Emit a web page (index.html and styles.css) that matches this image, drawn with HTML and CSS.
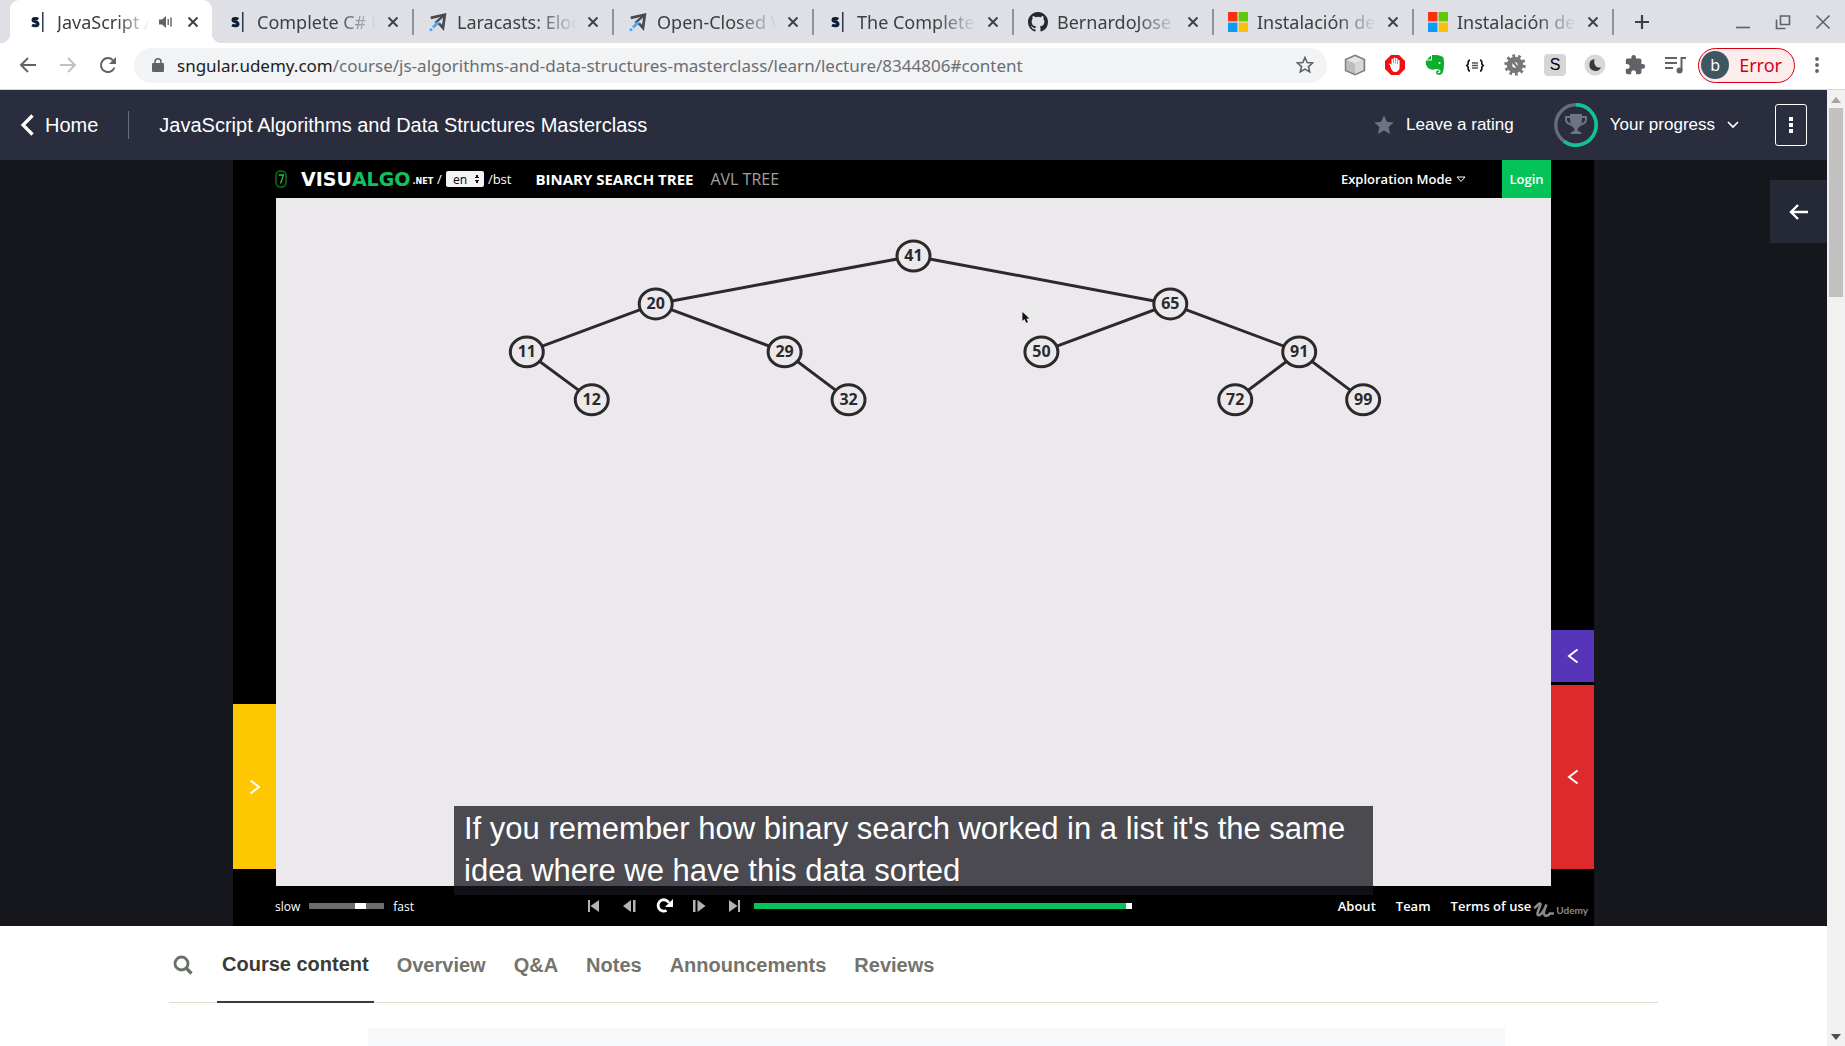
FILE: index.html
```html
<!DOCTYPE html>
<html lang="en">
<head>
<meta charset="utf-8">
<title>JavaScript Algorithms and Data Structures Masterclass</title>
<link rel="stylesheet" href="styles.css">
</head>
<body>
<svg class="defs" aria-hidden="true">
  <symbol id="close" viewBox="0 0 12 12"><path d="M1.500 1.500l9 9M10.500 1.500l-9 9" stroke="currentColor" stroke-width="1.900" fill="none"/></symbol>
  <symbol id="sngular" viewBox="0 0 20 20"><path d="M10.300 7.300C8.500 6.200 5 6 5 8c0 2.200 5 1.400 5 4 0 2.300-3.800 2.200-6 1" stroke="#0d1d36" stroke-width="3" fill="none"/><path d="M14.800 0v20" stroke="#0d1d36" stroke-width="1.300"/></symbol>
  <symbol id="laracasts" viewBox="0 0 20 22"><path d="M2 6.500L17.500 3 15.500 17.500 11 12.500" stroke="#484a50" stroke-width="3" fill="none"/><path d="M17.500 3L7 12" stroke="#484a50" stroke-width="2.500"/><path d="M10.500 11l-6 6" stroke="#4ea5f7" stroke-width="3"/><circle cx="2.200" cy="19.500" r="1.700" fill="#4ea5f7"/></symbol>
  <symbol id="github" viewBox="0 0 16 16"><path fill="#24292e" d="M8 0C3.580 0 0 3.580 0 8c0 3.540 2.290 6.530 5.470 7.590.4.070.55-.17.55-.38 0-.19-.01-.82-.01-1.490-2.010.37-2.530-.49-2.690-.94-.09-.23-.48-.94-.82-1.130-.28-.15-.68-.52-.01-.53.63-.01 1.080.58 1.230.82.72 1.210 1.870.87 2.330.66.07-.52.28-.87.51-1.070-1.780-.2-3.640-.89-3.640-3.950 0-.87.31-1.590.82-2.150-.08-.2-.36-1.020.08-2.120 0 0 .67-.21 2.200.82a7.600 7.600 0 014 0c1.530-1.040 2.200-.82 2.200-.82.44 1.100.16 1.920.08 2.120.51.56.82 1.270.82 2.150 0 3.070-1.870 3.750-3.650 3.950.29.25.54.73.54 1.480 0 1.070-.01 1.930-.01 2.200 0 .21.15.46.55.38A8 8 0 0016 8c0-4.420-3.580-8-8-8z"/></symbol>
  <symbol id="microsoft" viewBox="0 0 20 20"><path fill="#f7330f" d="M0 0h9.400v9.400H0z"/><path fill="#62c80b" d="M10.600 0H20v9.400h-9.400z"/><path fill="#0b9cf5" d="M0 10.600h9.400V20H0z"/><path fill="#fdbf09" d="M10.600 10.600H20V20h-9.400z"/></symbol>
  <symbol id="chevron-left" viewBox="0 0 12 16"><path d="M10.500 1.500L2 8l8.500 6.500" stroke="currentColor" stroke-width="2" fill="none"/></symbol>
</svg>

<header class="tabstrip">
  <div class="tab tab-active"><svg class="favicon"><use href="#sngular"/></svg><span class="tab-title">JavaScript Algorithms</span><svg class="audio" viewBox="0 0 14 14"><path d="M0 4.500h3L7 1v12L3 9.500H0z" fill="#5f6368"/><path d="M9.200 4v6M12 2.500v9" stroke="#5f6368" stroke-width="1.400"/></svg><button class="tab-close" aria-label="Close tab"><svg><use href="#close"/></svg></button></div>
  <div class="tab"><svg class="favicon"><use href="#sngular"/></svg><span class="tab-title">Complete C# Unity</span><button class="tab-close" aria-label="Close tab"><svg><use href="#close"/></svg></button></div>
  <div class="tab"><svg class="favicon"><use href="#laracasts"/></svg><span class="tab-title">Laracasts: Eloquent</span><button class="tab-close" aria-label="Close tab"><svg><use href="#close"/></svg></button></div>
  <div class="tab"><svg class="favicon"><use href="#laracasts"/></svg><span class="tab-title">Open-Closed Wins</span><button class="tab-close" aria-label="Close tab"><svg><use href="#close"/></svg></button></div>
  <div class="tab"><svg class="favicon"><use href="#sngular"/></svg><span class="tab-title">The Complete</span><button class="tab-close" aria-label="Close tab"><svg><use href="#close"/></svg></button></div>
  <div class="tab"><svg class="favicon"><use href="#github"/></svg><span class="tab-title">BernardoJose</span><button class="tab-close" aria-label="Close tab"><svg><use href="#close"/></svg></button></div>
  <div class="tab"><svg class="favicon"><use href="#microsoft"/></svg><span class="tab-title">Instalación de</span><button class="tab-close" aria-label="Close tab"><svg><use href="#close"/></svg></button></div>
  <div class="tab"><svg class="favicon"><use href="#microsoft"/></svg><span class="tab-title">Instalación de</span><button class="tab-close" aria-label="Close tab"><svg><use href="#close"/></svg></button></div>
  <button class="new-tab" aria-label="New tab"><svg viewBox="0 0 16 16"><path d="M8 1v14M1 8h14" stroke="#3c4043" stroke-width="2.200"/></svg></button>
  <div class="window-controls">
    <button aria-label="Minimize"><svg viewBox="0 0 16 16"><path d="M1 13.500h14" stroke="#5f6368" stroke-width="1.600"/></svg></button>
    <button aria-label="Restore"><svg viewBox="0 0 16 16"><path d="M5.500 2h9v8.500h-9zM1.500 5.500v9h9" stroke="#5f6368" stroke-width="1.600" fill="none"/></svg></button>
    <button aria-label="Close"><svg viewBox="0 0 16 16"><path d="M1.500 1.500l13 13M14.500 1.500l-13 13" stroke="#5f6368" stroke-width="1.600"/></svg></button>
  </div>
</header>

<div class="toolbar">
  <div class="nav-buttons">
    <button aria-label="Back"><svg viewBox="0 0 18 18"><path d="M17 9H2M9 2L2 9l7 7" stroke="#5f6368" stroke-width="1.900" fill="none"/></svg></button>
    <button aria-label="Forward"><svg viewBox="0 0 18 18"><path d="M1 9h15M9 2l7 7-7 7" stroke="#bdc0c4" stroke-width="1.900" fill="none"/></svg></button>
    <button aria-label="Reload"><svg viewBox="0 0 18 18"><path d="M15.500 11.500A7 7 0 1 1 14 4.200" stroke="#5f6368" stroke-width="2" fill="none"/><path d="M17 1v7h-7z" fill="#5f6368"/></svg></button>
  </div>
  <div class="omnibox">
    <svg class="lock" viewBox="0 0 12 14"><rect y="5" width="12" height="9" rx="1" fill="#5f6368"/><path d="M3 6V3.800a3 3 0 0 1 6 0V6" stroke="#5f6368" stroke-width="1.500" fill="none"/></svg>
    <div class="url"><span class="domain">sngular.udemy.com</span>/course/js-algorithms-and-data-structures-masterclass/learn/lecture/8344806#content</div>
    <button aria-label="Bookmark"><svg class="bookmark" viewBox="0 0 18 18"><path d="M9 1.500l2.200 5 5.400.5-4.100 3.600 1.200 5.300L9 13.100l-4.700 2.800 1.200-5.300L1.400 7l5.400-.5z" stroke="#5f6368" stroke-width="1.600" fill="none"/></svg></button>
  </div>
  <div class="extensions">
    <svg viewBox="0 0 22 22"><path d="M11 1.200l9.500 4.300v11L11 20.800l-9.500-4.300v-11z" fill="#bdbdbd" stroke="#808080" stroke-width="1.500"/><path d="M11 2.500l8 3.500-8 3.500L3 6z" fill="#e4e4e4"/><path d="M11 9.800l8-3.300v9.500l-8 3.700z" fill="#d8d8d8"/></svg>
    <svg viewBox="0 0 22 22"><path d="M7 1h8l6 6v8l-6 6H7l-6-6V7z" fill="#f40d12"/><path d="M6 11l-1.500-1c1-1.200 2.200-.5 3 .8V5.500a.8.800 0 0 1 1.600 0V9.500h.5V4.300a.8.800 0 0 1 1.700 0v5.200h.5V4.800a.8.800 0 0 1 1.700 0V10h.5V6.500a.8.800 0 0 1 1.600 0V13c0 3.500-2 5-4.500 5-3 0-4-3-5.100-7z" fill="#fff"/></svg>
    <svg viewBox="0 0 22 22"><path d="M8 1h5c3 1 6 1 6.500 3 1 5 .5 12-1 15-1 2.500-6.500 2.500-6.500-.5 0-2 2-2.500 3-2V18h-1.500c0 1.500 3 1.500 3-.5 0-2-3-2.500-5-2.500-1.500 1-5 1-7.500-1C2 12 1.500 9 2 6.500h5c1 0 1-.5 1-1.500z" fill="#0ead2b"/><path d="M7 1.500V5.500H3z" fill="#0ead2b"/><circle cx="15.500" cy="9" r="1" fill="#fff"/></svg>
    <svg viewBox="0 0 22 22"><path d="M6 6c-2.500 0-1.500 3-2 4.300L2.800 11.500 4 12.700C4.500 14 3.500 17 6 17M16 6c2.500 0 1.500 3 2 4.300l1.200 1.200-1.200 1.200c-.5 1.300.5 4.300-2 4.300" stroke="#111" stroke-width="1.700" fill="none"/><path d="M8 9h6M8 11.500h6M8 14h6" stroke="#555" stroke-width="1.400"/></svg>
    <svg viewBox="0 0 22 22"><circle cx="11" cy="11" r="9" fill="none" stroke="#777" stroke-width="3.500" stroke-dasharray="2.700 2.950"/><circle cx="11" cy="11" r="5.500" fill="none" stroke="#777" stroke-width="5.500"/><path d="M9 8l5 6" stroke="#777" stroke-width="2.400"/></svg>
    <span class="ext-letter">S</span>
    <svg viewBox="0 0 22 22"><circle cx="11" cy="11" r="10.500" fill="#d8d8d8"/><path d="M10.500 5a6 6 0 1 0 6.500 8c-4 2-8-2-6.500-8z" fill="#33383d"/></svg>
    <svg viewBox="0 0 24 24"><path fill="#5f6368" d="M20.500 11H19V7c0-1.100-.9-2-2-2h-4V3.500a2.500 2.500 0 0 0-5 0V5H4c-1.100 0-2 .9-2 2v3.800h1.500c1.500 0 2.700 1.200 2.700 2.700S5 16.200 3.500 16.200H2V20c0 1.100.9 2 2 2h3.800v-1.500c0-1.500 1.200-2.700 2.700-2.700s2.700 1.200 2.700 2.700V22H17c1.100 0 2-.9 2-2v-4h1.500a2.500 2.500 0 0 0 0-5z"/></svg>
    <svg viewBox="0 0 22 22"><path d="M1 4h12M1 9h12M1 14h8M17.500 17V4H22" stroke="#5f6368" stroke-width="2" fill="none"/><circle cx="15.500" cy="16.500" r="3" fill="#5f6368"/></svg>
  </div>
  <button class="profile"><span class="avatar">b</span>Error</button>
  <button class="kebab" aria-label="Menu"><svg viewBox="0 0 4 16"><g fill="#5f6368"><circle cx="2" cy="2" r="1.900"/><circle cx="2" cy="8" r="1.900"/><circle cx="2" cy="14" r="1.900"/></g></svg></button>
</div>

<div class="viewport">
  <div class="page">
    <header class="course-header">
      <a class="home" href="#"><svg viewBox="0 0 14 22"><path d="M12.500 1.500L3 11l9.500 9.500" stroke="#fff" stroke-width="3.200" fill="none"/></svg>Home</a>
      <h1>JavaScript Algorithms and Data Structures Masterclass</h1>
      <button class="rating"><svg viewBox="0 0 20 20"><path fill="#6e7383" d="M10 .5l2.900 6.300 6.800.7-5.100 4.600 1.500 6.900L10 15.500 3.900 19l1.500-6.900L.3 7.500l6.800-.7z"/></svg>Leave a rating</button>
      <button class="progress"><svg class="ring" viewBox="0 0 44 44"><circle cx="22" cy="22" r="20.200" fill="none" stroke="#686b7a" stroke-width="3.400"/><path d="M22 1.800A20.200 20.200 0 1 1 10 38.300" fill="none" stroke="#0cc592" stroke-width="3.400"/><path fill="#6e7383" d="M16 11h12v2h5v3.500c0 3.500-3 5.500-6 6-1 1.300-2 2-3.200 2.400V28c1.500 0 3.700.7 3.700 3H16.500c0-2.300 2.200-3 3.700-3v-3.100c-1.200-.4-2.200-1.100-3.200-2.400-3-.5-6-2.500-6-6V13h5zm-3 4v1.500c0 2 1.700 3.200 3.500 3.700-.4-1.400-.5-3.200-.5-5.200zm18 0h-3c0 2-.1 3.800-.5 5.200 1.800-.5 3.500-1.700 3.500-3.700z"/></svg>Your progress<svg class="caret" viewBox="0 0 12 8"><path d="M1 1l5 5 5-5" stroke="#fff" stroke-width="1.700" fill="none"/></svg></button>
      <button class="more" aria-label="More"><svg viewBox="0 0 4 16"><path d="M0 0h4v4H0zM0 6h4v4H0zM0 12h4v4H0z" fill="#fff"/></svg></button>
    </header>

    <main>
      <section class="stage">
        <div class="video">
          <div class="va-header">
            <svg class="va-badge" viewBox="0 0 12 18"><rect x="1" y="1" width="10" height="16" rx="4.500" fill="none" stroke="#087a1e" stroke-width="1.400"/><path d="M3.500 5h5l-3 8.500" stroke="#1ec247" stroke-width="1.300" fill="none"/></svg>
            <a class="va-logo" href="#">VISU<b>ALGO</b></a><span class="va-net">.NET</span>
            <label class="va-lang">/<select aria-label="Language"><option>en</option></select>/bst</label>
            <a class="va-mode va-mode-on" href="#">BINARY SEARCH TREE</a>
            <a class="va-mode" href="#">AVL TREE</a>
            <button class="va-explore">Exploration Mode<svg viewBox="0 0 10 7"><path d="M1 1h8L5 5.500z" stroke="#fff" fill="none"/></svg></button>
            <button class="va-login">Login</button>
          </div>
          <div class="va-body">
            <div class="va-side"><button class="drawer drawer-yellow" aria-label="Open actions"><svg class="flip"><use href="#chevron-left"/></svg></button></div>
            <svg class="canvas" viewBox="0 0 1276 688" preserveAspectRatio="xMidYMin meet">
              <g stroke="#2b292b" stroke-width="3">
                <path d="M638 58L380 106L251 154L316 202M380 106L509 154L573 202M638 58L895 106L766 154M895 106L1024 154L960 202M1024 154L1088 202" fill="none"/>
                <g fill="#ece9ec">
                  <ellipse cx="638" cy="58" rx="16.500" ry="15"/><ellipse cx="380" cy="106" rx="16.500" ry="15"/><ellipse cx="895" cy="106" rx="16.500" ry="15"/><ellipse cx="251" cy="154" rx="16.500" ry="15"/><ellipse cx="509" cy="154" rx="16.500" ry="15"/><ellipse cx="766" cy="154" rx="16.500" ry="15"/><ellipse cx="1024" cy="154" rx="16.500" ry="15"/><ellipse cx="316" cy="202" rx="16.500" ry="15"/><ellipse cx="573" cy="202" rx="16.500" ry="15"/><ellipse cx="960" cy="202" rx="16.500" ry="15"/><ellipse cx="1088" cy="202" rx="16.500" ry="15"/>
                </g>
              </g>
              <g class="node-labels">
                <text x="638" y="63">41</text><text x="380" y="111">20</text><text x="895" y="111">65</text><text x="251" y="159">11</text><text x="509" y="159">29</text><text x="766" y="159">50</text><text x="1024" y="159">91</text><text x="316" y="207">12</text><text x="573" y="207">32</text><text x="960" y="207">72</text><text x="1088" y="207">99</text>
              </g>
              <path d="M747 114v9l2-2 2 4 1.500-1-1.500-3.500h3z" fill="#111"/>
            </svg>
            <div class="va-side"><button class="drawer drawer-purple" aria-label="Open code trace"><svg><use href="#chevron-left"/></svg></button><button class="drawer drawer-red" aria-label="Open status"><svg><use href="#chevron-left"/></svg></button></div>
          </div>
          <div class="va-footer">
            <label class="speed">slow<input type="range" class="speed-range" min="0" max="100" value="72" aria-label="Speed">fast</label>
            <div class="playback">
              <button aria-label="First"><svg viewBox="0 0 18 16"><path d="M3 2h2v12H3zM14 2v12L5.500 8z" fill="#b5b5b5"/></svg></button>
              <button aria-label="Step back"><svg viewBox="0 0 18 16"><path d="M13 2h2.500v12H13zM11 2v12L3 8z" fill="#b5b5b5"/></svg></button>
              <button aria-label="Replay"><svg viewBox="0 0 18 16"><path d="M11.500 12.500A5.700 5.700 0 1 1 14 5" stroke="#fff" stroke-width="2.800" fill="none"/><path d="M18 1v8H10z" fill="#fff"/></svg></button>
              <button aria-label="Step forward"><svg viewBox="0 0 18 16"><path d="M3 2h2.500v12H3zM7.500 2v12l8-6z" fill="#b5b5b5"/></svg></button>
              <button aria-label="Last"><svg viewBox="0 0 18 16"><path d="M13 2h2v12h-2zM4 2v12l8.500-6z" fill="#b5b5b5"/></svg></button>
            </div>
            <input type="range" class="seek" min="0" max="100" value="100" aria-label="Seek">
            <nav class="va-links"><a href="#">About</a><a href="#">Team</a><a href="#">Terms of use</a></nav>
            <div class="udemy"><svg viewBox="0 0 22 16"><path d="M1 6c3-1 4-5 6-4.500C9 2 4 9 4.500 12c.5 3 5 1 9-9.500-3 7-3.500 10-1.500 11 2 .8 4-.5 5-2h4" stroke="#8a8a8a" stroke-width="2.600" fill="none"/></svg>Udemy</div>
          </div>
          <p class="caption">If you remember how binary search worked in a list it's the same idea where we have this data sorted</p>
        </div>
        <button class="sidebar-toggle" aria-label="Open sidebar"><svg viewBox="0 0 20 16"><path d="M19 8H2M9 1L2 8l7 7" stroke="#fff" stroke-width="2.400" fill="none"/></svg></button>
      </section>

      <section class="dashboard">
        <nav class="course-tabs">
          <button class="search" aria-label="Search"><svg viewBox="0 0 20 20"><circle cx="8.500" cy="8.500" r="6.500" stroke="#686f67" stroke-width="2.800" fill="none"/><path d="M13 13l5.500 5.500" stroke="#686f67" stroke-width="3.200"/></svg></button>
          <a class="current" href="#">Course content</a><a href="#">Overview</a><a href="#">Q&amp;A</a><a href="#">Notes</a><a href="#">Announcements</a><a href="#">Reviews</a>
        </nav>
        <div class="panel"></div>
      </section>
    </main>
  </div>
  <div class="scrollbar" aria-hidden="true">
    <svg viewBox="0 0 10 6"><path d="M5 0l5 6H0z" fill="#a3a3a3"/></svg>
    <div class="thumb"></div>
    <svg viewBox="0 0 10 6"><path d="M0 0h10L5 6z" fill="#505050"/></svg>
  </div>
</div>
</body>
</html>
```

FILE: styles.css
```css
* { box-sizing: border-box; }
body {
  margin: 0;
  height: 100vh;
  display: flex;
  flex-direction: column;
  overflow: hidden;
  font-family: "Liberation Sans", Arial, sans-serif;
  background: #fff;
}
button { border: 0; padding: 0; background: none; font: inherit; color: inherit; }
a { color: inherit; text-decoration: none; }
svg { display: block; flex: none; }
.defs { position: absolute; width: 0; height: 0; }

/* Browser tab strip */
.tabstrip {
  flex: none;
  display: flex;
  align-items: center;
  height: 43px;
  padding: 0 14px;
  background: #dee0e6;
  font: 18px "Noto Sans", "Open Sans", sans-serif;
  color: #3c4043;
}
.tab {
  flex: 0 1 200px;
  min-width: 0;
  height: 26px;
  display: flex;
  align-items: center;
  padding: 0 13px 0 14px;
  border-right: 2px solid #909297;
}
.tab-active {
  position: relative;
  flex-basis: 198px;
  height: 43px;
  margin-right: 2px;
  border-right: 0;
  background: #fff;
  border-radius: 9px 9px 0 0;
  box-shadow: -4px 0 #fff;
}
.tab-active::before, .tab-active::after {
  content: "";
  position: absolute;
  bottom: 0;
  width: 9px;
  height: 9px;
}
.tab-active::before { left: -13px; background: radial-gradient(circle at 0 0, #dee0e6 9px, #fff 9px); }
.tab-active::after { right: -9px; background: radial-gradient(circle at 100% 0, #dee0e6 9px, #fff 9px); }
.favicon { width: 20px; height: 20px; }
.tab-title {
  flex: 1;
  margin: 0 8px 0 9px;
  overflow: hidden;
  white-space: nowrap;
  -webkit-mask-image: linear-gradient(90deg, #000 65%, transparent 98%);
  mask-image: linear-gradient(90deg, #000 65%, transparent 98%);
}
.audio { width: 14px; height: 14px; margin-right: 14px; }
.tab-close svg { width: 12px; height: 12px; }
.new-tab { margin-left: 20px; }
.new-tab svg, .window-controls svg { width: 16px; height: 16px; }
.window-controls { margin-left: auto; display: flex; gap: 24px; }

/* Browser toolbar */
.toolbar {
  flex: none;
  display: flex;
  align-items: center;
  height: 47px;
  padding: 0 26px 2px 19px;
  border-bottom: 1px solid #d3d6da;
  background: #fff;
  font: 17px "Noto Sans", "Open Sans", sans-serif;
}
.nav-buttons { display: flex; gap: 22px; margin-right: 17px; }
.nav-buttons svg { width: 18px; height: 18px; }
.omnibox {
  flex: 1;
  min-width: 0;
  display: flex;
  align-items: center;
  height: 35px;
  padding: 0 13px 0 18px;
  border-radius: 18px;
  background: #f1f3f4;
}
.lock { width: 12px; height: 14px; margin-right: 13px; }
.url { flex: 1; white-space: nowrap; overflow: hidden; color: #6a6e73; }
.domain { color: #202124; }
.bookmark { width: 18px; height: 18px; }
.extensions { display: flex; align-items: center; gap: 18px; margin: 0 12px 0 17px; }
.extensions svg { width: 22px; height: 22px; }
.ext-letter {
  width: 22px;
  height: 22px;
  border-radius: 4px;
  background: #d6d6d6;
  font: 16px/22px "Liberation Sans", sans-serif;
  text-align: center;
}
.profile {
  display: flex;
  align-items: center;
  gap: 10px;
  height: 35px;
  padding: 0 12px 0 2px;
  border: 1px solid #d5000f;
  border-radius: 18px;
  background: #fdecec;
  color: #d0021b;
  font-size: 18px;
}
.avatar {
  width: 28px;
  height: 28px;
  border-radius: 50%;
  background: #3f5763;
  color: #fff;
  font-size: 16px;
  line-height: 28px;
}
.kebab { margin-left: 20px; }
.kebab svg { width: 4px; height: 16px; }

/* Page viewport */
.viewport { flex: 1; min-height: 0; display: flex; }
.page { flex: 1; min-width: 0; overflow: hidden; }
.scrollbar {
  width: 18px;
  display: flex;
  flex-direction: column;
  align-items: center;
  padding: 7px 0 6px;
  background: #f1f1f1;
}
.scrollbar svg { width: 10px; height: 6px; }
.thumb { width: 14px; height: 20%; margin: 5px 0 auto; background: #c1c1c1; }

/* Course header */
.course-header {
  display: flex;
  align-items: center;
  height: 70px;
  padding: 0 20px;
  background: #2a2d3e;
  color: #fff;
  font-size: 17px;
}
.home {
  display: flex;
  align-items: center;
  gap: 11px;
  height: 28px;
  padding-right: 30px;
  border-right: 1px solid #686b7a;
  font-size: 20px;
}
.home svg { width: 14px; height: 22px; }
.course-header h1 { flex: 1; margin: 0 0 0 30px; font-size: 20px; font-weight: 400; }
.rating, .progress { display: flex; align-items: center; gap: 12px; }
.rating { margin-right: 40px; }
.rating svg { width: 20px; height: 20px; }
.ring { width: 44px; height: 44px; }
.caret { width: 12px; height: 8px; }
.more {
  display: flex;
  align-items: center;
  justify-content: center;
  width: 32px;
  height: 42px;
  margin-left: 36px;
  border: 1px solid #fff;
  border-radius: 3px;
}
.more svg { width: 4px; height: 16px; }

/* Video stage */
.stage { position: relative; background: #16171c; }
.sidebar-toggle {
  position: absolute;
  top: 20px;
  right: 0;
  width: 57px;
  height: 63px;
  display: flex;
  align-items: center;
  justify-content: center;
  background: #242935;
}
.sidebar-toggle svg { width: 20px; height: 16px; }
.video {
  position: relative;
  display: flex;
  flex-direction: column;
  width: 100%;
  max-width: 1361px;
  aspect-ratio: 1361 / 766;
  margin: 0 auto;
  background: #000;
  color: #fff;
  font-family: "Open Sans", "Noto Sans", sans-serif;
}
.va-header { flex: none; display: flex; align-items: center; height: 38px; padding: 0 43px 0 42px; }
.va-badge { width: 12px; height: 18px; margin-right: 14px; }
.va-logo { font: 700 19px "DejaVu Sans", sans-serif; }
.va-logo b { color: #12c05f; }
.va-net { margin: 4px 4px 0 2px; font: 700 8px "DejaVu Sans", sans-serif; }
.va-lang { display: flex; align-items: center; gap: 4px; font-size: 13px; }
.va-lang select {
  width: 38px;
  height: 16px;
  padding: 0 0 0 7px;
  border: 0;
  border-radius: 2px;
  appearance: none;
  color: #111;
  font: 12px "Noto Sans", sans-serif;
  background:
    conic-gradient(from 153deg at 50% 0, #111 54deg, transparent 0) right 4px top 3px / 6px 4px no-repeat,
    conic-gradient(from -27deg at 50% 100%, #111 54deg, transparent 0) right 4px bottom 3px / 6px 4px no-repeat,
    #f4f4f4;
}
.va-mode { margin-left: 17px; font-size: 16px; color: #a0a0a0; }
.va-mode-on { margin-left: 24px; font-size: 15px; font-weight: 700; color: #fff; }
.va-explore { display: flex; align-items: center; gap: 4px; margin: 0 36px 0 auto; font-size: 13px; font-weight: 600; }
.va-explore svg { width: 10px; height: 7px; }
.va-login { width: 49px; height: 38px; background: #05c35b; font-size: 13px; font-weight: 600; }
.va-body { flex: 1; min-height: 0; display: flex; }
.va-side {
  width: 43px;
  flex: none;
  display: flex;
  flex-direction: column;
  justify-content: flex-end;
  gap: 3px;
  padding-bottom: 17px;
}
.drawer { display: flex; align-items: center; justify-content: center; }
.drawer svg { width: 12px; height: 16px; }
.drawer .flip { transform: scaleX(-1); }
.drawer-yellow { height: 165px; background: #ffc602; }
.drawer-purple { height: 52px; background: #5635b8; }
.drawer-red { height: 184px; background: #df2a2b; }
.canvas { flex: 1; min-width: 0; height: 100%; background: #ece9ec; }
.node-labels {
  fill: #2b292b;
  font: 700 16px "Open Sans", sans-serif;
  text-anchor: middle;
}
.va-footer { flex: none; display: flex; align-items: center; height: 40px; padding: 0 6px 0 42px; font-size: 13px; }
.speed { display: flex; align-items: center; gap: 9px; font-size: 12px; }
input[type="range"] { appearance: none; margin: 0; height: 6px; }
.speed-range { width: 75px; background: #6f6c6f; }
.speed-range::-webkit-slider-thumb { appearance: none; width: 11px; height: 6px; background: #fff; }
.playback { display: flex; gap: 17px; margin: 0 11px 0 171px; }
.playback svg { width: 18px; height: 16px; }
.seek { width: 378px; background: #05c35b; }
.seek::-webkit-slider-thumb { appearance: none; width: 6px; height: 6px; background: #fff; }
.va-links { display: flex; gap: 20px; margin-left: auto; font-weight: 600; }
.udemy {
  display: flex;
  align-items: center;
  gap: 1px;
  margin-left: 2px;
  padding-top: 8px;
  font: 700 10px Lato, sans-serif;
  color: #8a8a8a;
}
.udemy svg { width: 22px; height: 16px; }
.caption {
  position: absolute;
  left: 221px;
  right: 221px;
  bottom: 31px;
  margin: 0;
  padding: 2px 10px 3px;
  background: rgba(22, 20, 28, 0.75);
  font: 31px/42px "Liberation Sans", Arial, sans-serif;
}

/* Course tabs */
.dashboard { max-width: 1489px; margin: 0 auto; }
.course-tabs {
  display: flex;
  height: 77px;
  border-bottom: 1px solid #dedfcb;
  font-size: 20px;
  font-weight: 700;
  color: #73746b;
}
.course-tabs a { display: flex; align-items: center; height: 77px; padding: 2px 5px 0; margin-right: 18px; }
.course-tabs .current { color: #3a3b34; border-bottom: 2px solid #3a3b34; }
.search { padding: 2px 4px 0; margin-right: 20px; }
.search svg { width: 20px; height: 20px; }
.panel { height: 200px; margin: 25px 153px 0 199px; background: #f7f8fa; }
```
